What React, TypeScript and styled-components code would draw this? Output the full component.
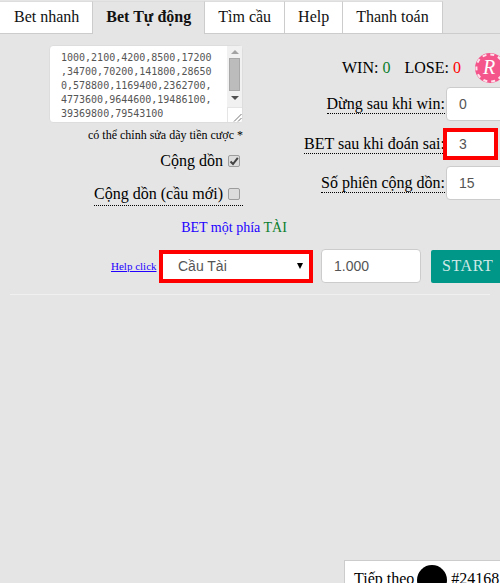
import React from "react";
import styled, { createGlobalStyle } from "styled-components";

const GlobalStyle = createGlobalStyle`
  html, body { margin: 0; padding: 0; background: #e5e5e5; }
  body { font-family: "Liberation Serif", serif; font-size: 16px; color: #000; }
  * { box-sizing: border-box; }
`;

const Page = styled.div`
  width: 500px;
  height: 583px;
  overflow: hidden;
  display: flex;
  flex-direction: column;
`;

const Tabs = styled.nav`
  display: flex;
  height: 33px;
  flex: none;
  margin-top: 1px;
  border-bottom: 1px solid #ccc;
`;

const Tab = styled.a<{ $active?: boolean }>`
  padding: 6px 13px 0 13px;
  margin-bottom: ${(p) => (p.$active ? "-1px" : "0")};
  background: ${(p) => (p.$active ? "#e5e5e5" : "#fff")};
  font-weight: ${(p) => (p.$active ? "bold" : "normal")};
  border-right: 1px solid #ccc;
  border-left: ${(p) => (p.$active ? "1px solid #ccc" : "none")};
  border-top: 1px solid #ddd;
  color: #111;

  &:first-child {
    padding: 6px 13px 0 14px;
    border-right: none;
  }
`;

const Main = styled.main`
  flex: 1;
  min-height: 0;
`;

const Columns = styled.div`
  display: flex;
  align-items: flex-start;
`;

const LeftColumn = styled.section`
  width: 243px;
  flex: none;
  padding-top: 11px;
  display: flex;
  flex-direction: column;
  align-items: flex-end;
`;

const SeqWrap = styled.div`
  position: relative;
  width: 194px;
  height: 78px;
`;

const SeqBox = styled.textarea`
  display: block;
  width: 194px;
  height: 78px;
  padding: 5px 16px 4px 11px;
  margin: 0;
  border: 1px solid #ddd;
  border-radius: 4px;
  background: #fff;
  color: #555;
  font-family: "DejaVu Sans Mono", monospace;
  font-size: 10px;
  line-height: 14px;
  overflow: hidden;
  white-space: pre;
  resize: none;
  outline: none;
`;

const ScrollRail = styled.div`
  position: absolute;
  top: 1px;
  right: 1px;
  bottom: 1px;
  width: 15px;
  display: flex;
  flex-direction: column;
  align-items: center;
  background: #f1f1f1;
`;

const ScrollArrow = styled.span<{ $down?: boolean }>`
  flex: none;
  width: 0;
  height: 0;
  margin: ${(p) => (p.$down ? "5px 0 4px" : "4px 0 3px")};
  border-left: 4px solid transparent;
  border-right: 4px solid transparent;
  border-top: ${(p) => (p.$down ? "4px solid #505050" : "none")};
  border-bottom: ${(p) => (p.$down ? "none" : "4px solid #a3a3a3")};
`;

const ScrollThumb = styled.span`
  flex: none;
  width: 11px;
  height: 33px;
  margin-top: 1px;
  background: #bcbcbc;
  border: 1px solid #a8a8a8;
`;

const ResizeCorner = styled.span`
  margin-top: auto;
  flex: none;
  width: 15px;
  height: 15px;
  background: #fff;
  border-top: 1px solid #e5e5e5;
  border-left: 1px solid #e5e5e5;
  border-radius: 0 0 3px 0;
  display: flex;
  align-items: flex-end;
  justify-content: flex-end;
`;

const Hint = styled.div`
  font-size: 12px;
  line-height: 16px;
  margin-top: 4px;
  white-space: nowrap;
`;

const CheckRow = styled.label<{ $dotted?: boolean }>`
  display: flex;
  align-items: center;
  justify-content: flex-end;
  gap: 5px;
  height: 24px;
  margin-top: ${(p) => (p.$dotted ? "9px" : "6px")};
  border-bottom: ${(p) => (p.$dotted ? "1px dotted #000" : "none")};
`;

const CheckBox = styled.span`
  width: 12px;
  height: 12px;
  margin-right: 3px;
  flex: none;
  display: flex;
  align-items: center;
  justify-content: center;
  background: #dcdcdc;
  border: 1px solid #9c9c9c;
  border-radius: 2px;
`;

const RightColumn = styled.section`
  width: 283px;
  flex: none;
  padding-top: 22px;
`;

const ScoreRow = styled.div`
  display: flex;
  align-items: center;
  height: 24px;
  padding-left: 99px;
  margin-bottom: 7px;
`;

const Score = styled.span`
  margin-right: 14px;
  white-space: nowrap;
`;

const ScoreValue = styled.span<{ $color: string }>`
  color: ${(p) => p.$color};
`;

const FieldRow = styled.div<{ $gap: number }>`
  display: flex;
  align-items: center;
  margin-top: ${(p) => p.$gap}px;
  width: 283px;
`;

const FieldLabel = styled.label`
  width: 202px;
  flex: none;
  display: flex;
  justify-content: flex-end;
  white-space: nowrap;
  > span {
    border-bottom: 1px dotted #000;
    line-height: 19px;
  }
`;

const NumberInput = styled.input<{ $highlight?: boolean }>`
  flex: none;
  font-family: "Liberation Sans", sans-serif;
  font-size: 14px;
  color: #555;
  background: #fff;
  outline: none;
  width: ${(p) => (p.$highlight ? "55px" : "80px")};
  height: ${(p) => (p.$highlight ? "32px" : "34px")};
  padding: 0 12px;
  margin-left: ${(p) => (p.$highlight ? "-2px" : "1px")};
  border: ${(p) => (p.$highlight ? "4px solid #f00" : "1px solid #ccc")};
  border-radius: ${(p) => (p.$highlight ? "0" : "4px")};
`;

const OneSide = styled.div`
  text-align: center;
  width: 468px;
  margin-top: 13px;
  height: 18px;
  line-height: 18px;
  font-size: 14px;
  color: #2200ff;
`;

const Green = styled.span`
  color: #0a7d2c;
`;

const Controls = styled.div`
  display: flex;
  align-items: center;
  margin-top: 12px;
  padding-left: 111px;
  width: 560px;
`;

const HelpLink = styled.a`
  font-size: 11px;
  color: #2200ff;
  text-decoration: underline;
  width: 48px;
  flex: none;
  white-space: nowrap;
`;

const SelectBox = styled.div`
  width: 154px;
  height: 33px;
  flex: none;
  border: 4px solid #f00;
  background: #fff;
  display: flex;
  align-items: center;
  justify-content: space-between;
  padding: 0 6px 0 15px;
  font-family: "Liberation Sans", sans-serif;
  font-size: 14px;
  color: #555;
`;

const Caret = styled.span`
  width: 0;
  height: 0;
  border-left: 3.5px solid transparent;
  border-right: 3.5px solid transparent;
  border-top: 6px solid #000;
`;

const AmountInput = styled.input`
  width: 100px;
  height: 34px;
  flex: none;
  margin-left: 8px;
  padding: 0 12px;
  border: 1px solid #ccc;
  border-radius: 4px;
  background: #fff;
  color: #555;
  font-family: "Liberation Sans", sans-serif;
  font-size: 14px;
  outline: none;
`;

const StartButton = styled.button`
  width: 90px;
  height: 33px;
  flex: none;
  margin-left: 10px;
  padding: 0 0 0 11px;
  text-align: left;
  border: none;
  border-radius: 2px;
  background: #009688;
  color: #cfe9e6;
  font-family: "Liberation Serif", serif;
  font-size: 16px;
  letter-spacing: 0.6px;
`;

const Divider = styled.hr`
  margin: 11px 10px 0;
  border: none;
  border-top: 1px solid #f0f0f0;
`;

const Footer = styled.footer`
  flex: none;
  height: 23px;
  padding-left: 344px;
`;

const NextCard = styled.div`
  width: 190px;
  height: 50px;
  background: #fff;
  border: 1px solid #ccc;
  display: flex;
  align-items: flex-start;
  padding: 4px 0 0 9px;
  white-space: nowrap;
  line-height: 28px;
`;

const Ball = styled.span`
  width: 30px;
  height: 30px;
  border-radius: 50%;
  background: #000;
  flex: none;
  margin: 0 4px 0 3px;
`;

function ChipLogo() {
  return (
    <svg width="30" height="30" viewBox="0 0 30 30" style={{ flex: "none" }}>
      <circle cx="15" cy="15" r="15" fill="#f4568c" />
      <circle cx="15" cy="15" r="13.6" fill="none" stroke="#ffe3ec" strokeWidth="2" strokeDasharray="4 4" />
      <text x="14" y="21" textAnchor="middle" fontFamily="Liberation Serif" fontStyle="italic" fontSize="20" fill="#fff">R</text>
    </svg>
  );
}

function Tick() {
  return (
    <svg width="10" height="10" viewBox="0 0 10 10">
      <path d="M1.5 5.5 L4 8 L8.8 1.8" fill="none" stroke="#444" strokeWidth="2" />
    </svg>
  );
}

function Grip() {
  return (
    <svg width="9" height="9" viewBox="0 0 9 9">
      <path d="M1 8.5 L8.5 1 M5 8.5 L8.5 5" stroke="#777" strokeWidth="1" />
    </svg>
  );
}

const sequence = [
  "1000,2100,4200,8500,17200",
  ",34700,70200,141800,28650",
  "0,578800,1169400,2362700,",
  "4773600,9644600,19486100,",
  "39369800,79543100",
].join("\n");

export default function App() {
  return (
    <Page>
      <GlobalStyle />
      <Tabs>
        <Tab>Bet nhanh</Tab>
        <Tab $active>Bet Tự động</Tab>
        <Tab>Tìm cầu</Tab>
        <Tab>Help</Tab>
        <Tab>Thanh toán</Tab>
      </Tabs>
      <Main>
        <Columns>
          <LeftColumn>
            <SeqWrap>
              <SeqBox defaultValue={sequence} />
              <ScrollRail>
                <ScrollArrow />
                <ScrollThumb />
                <ScrollArrow $down />
                <ResizeCorner><Grip /></ResizeCorner>
              </ScrollRail>
            </SeqWrap>
            <Hint>có thể chỉnh sửa dãy tiền cược *</Hint>
            <CheckRow>
              Cộng dồn <CheckBox><Tick /></CheckBox>
            </CheckRow>
            <CheckRow $dotted>
              Cộng dồn (cầu mới) <CheckBox />
            </CheckRow>
          </LeftColumn>
          <RightColumn>
            <ScoreRow>
              <Score>
                WIN: <ScoreValue $color="#0a7d2c">0</ScoreValue>
              </Score>
              <Score>
                LOSE: <ScoreValue $color="#f00">0</ScoreValue>
              </Score>
              <ChipLogo />
            </ScoreRow>
            <FieldRow $gap={0}>
              <FieldLabel><span>Dừng sau khi win:</span></FieldLabel>
              <NumberInput defaultValue="0" />
            </FieldRow>
            <FieldRow $gap={7}>
              <FieldLabel><span>BET sau khi đoán sai:</span></FieldLabel>
              <NumberInput $highlight defaultValue="3" />
            </FieldRow>
            <FieldRow $gap={6}>
              <FieldLabel><span>Số phiên cộng dồn:</span></FieldLabel>
              <NumberInput defaultValue="15" />
            </FieldRow>
          </RightColumn>
        </Columns>
        <OneSide>
          BET một phía <Green>TÀI</Green>
        </OneSide>
        <Controls>
          <HelpLink href="#">Help click</HelpLink>
          <SelectBox>
            Cầu Tài
            <Caret />
          </SelectBox>
          <AmountInput defaultValue="1.000" />
          <StartButton>START</StartButton>
        </Controls>
        <Divider />
      </Main>
      <Footer>
        <NextCard>
          Tiếp theo
          <Ball />
          #24168
        </NextCard>
      </Footer>
    </Page>
  );
}
